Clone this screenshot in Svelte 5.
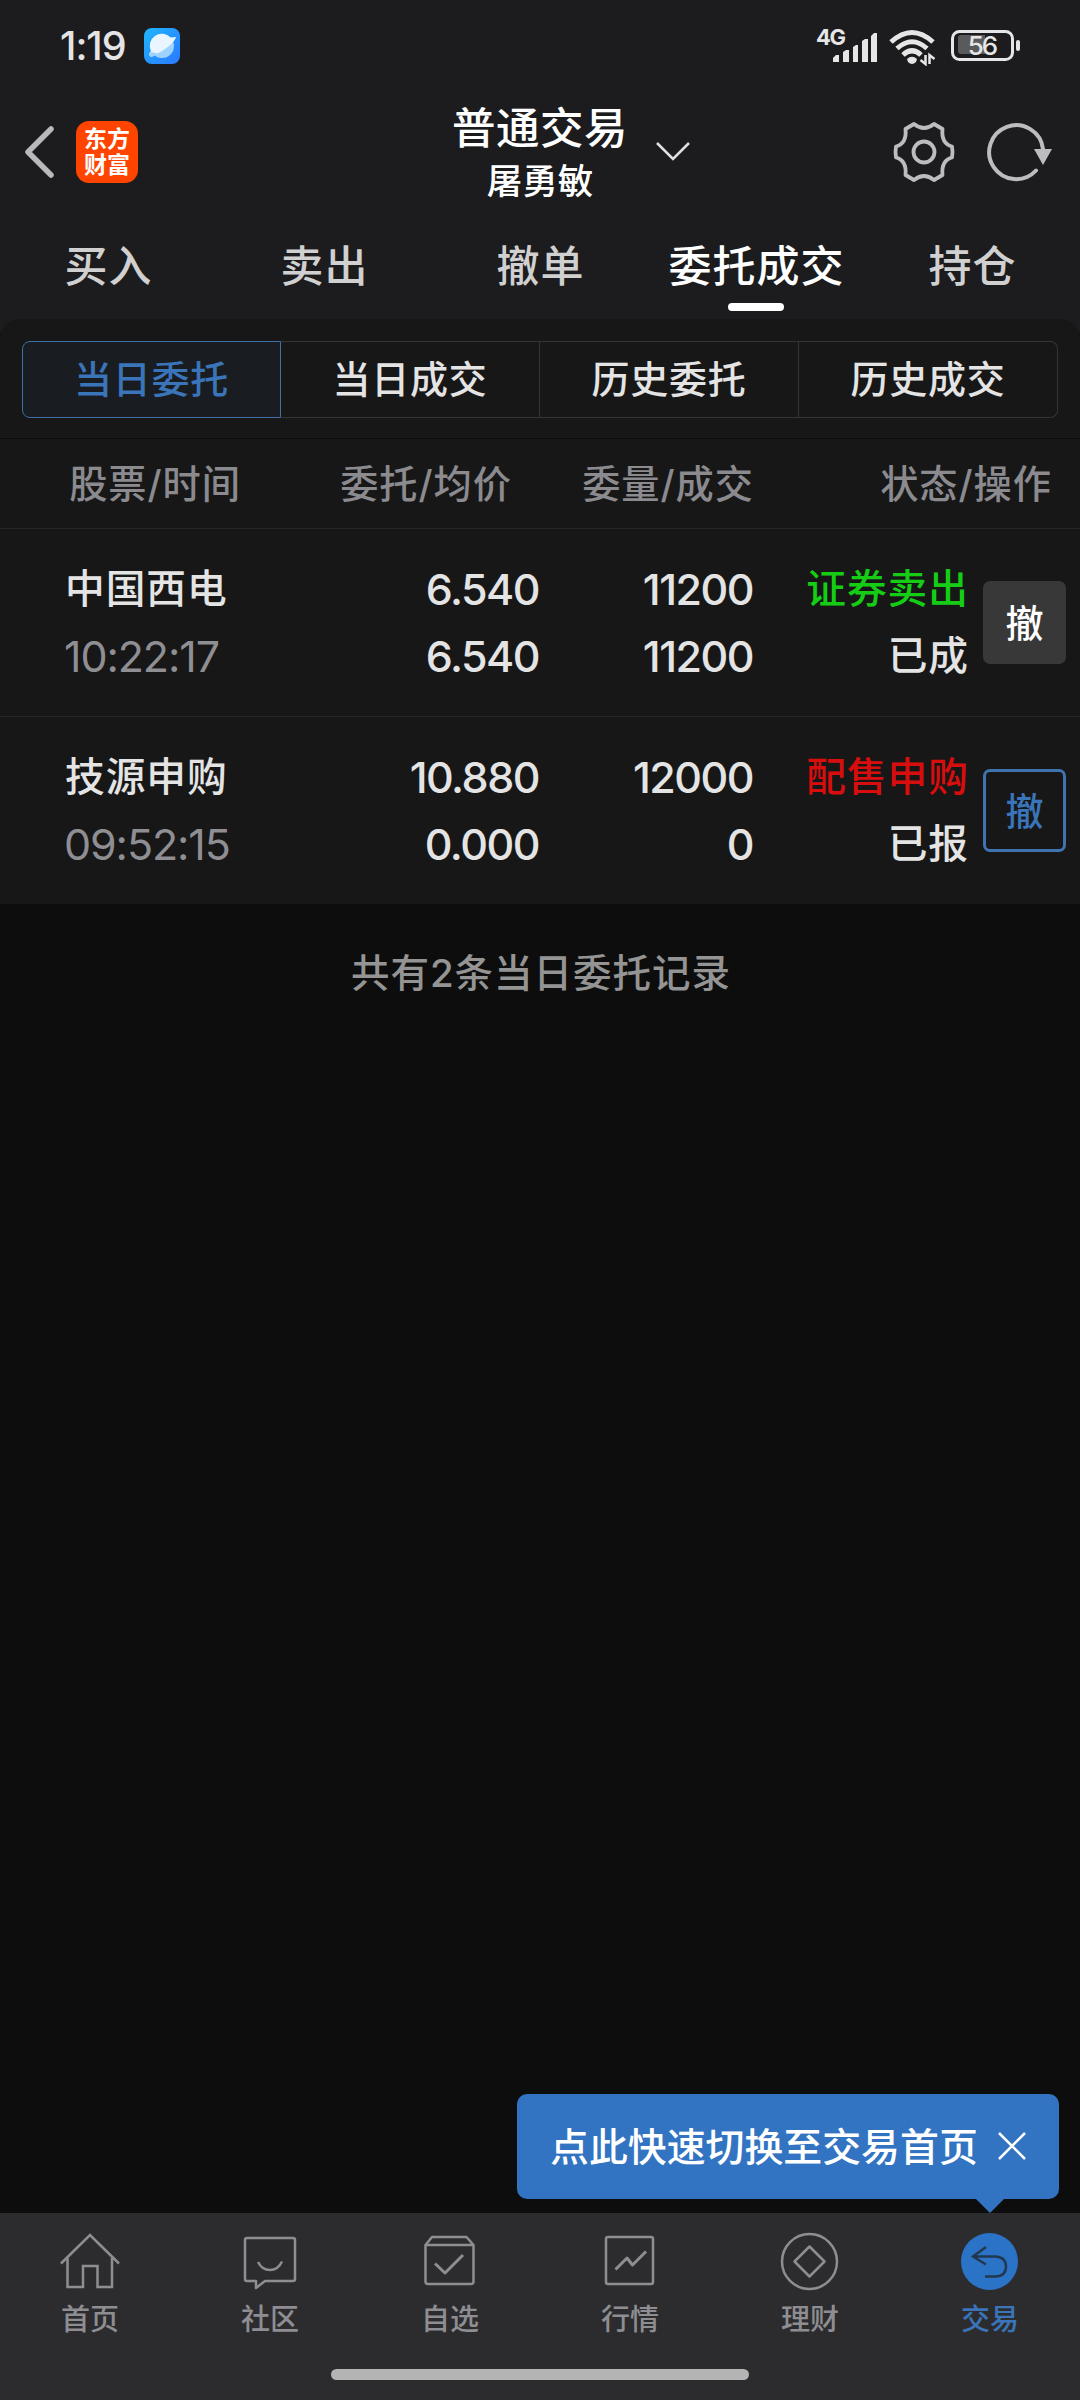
<script lang="ts">
  let activeTab = '委托成交';
  let activeSegment = '当日委托';
  let tipVisible = true;

  const tabs = ['买入', '卖出', '撤单', '委托成交', '持仓'];
  const segments = ['当日委托', '当日成交', '历史委托', '历史成交'];

  const orders = [
    {
      name: '中国西电',
      time: '10:22:17',
      price: '6.540',
      average: '6.540',
      amount: '11200',
      filled: '11200',
      side: '证券卖出',
      type: 'sell',
      status: '已成',
      cancelable: false
    },
    {
      name: '技源申购',
      time: '09:52:15',
      price: '10.880',
      average: '0.000',
      amount: '12000',
      filled: '0',
      side: '配售申购',
      type: 'buy',
      status: '已报',
      cancelable: true
    }
  ];

  const navItems = [
    { id: 'home', label: '首页' },
    { id: 'community', label: '社区' },
    { id: 'watchlist', label: '自选' },
    { id: 'market', label: '行情' },
    { id: 'wealth', label: '理财' },
    { id: 'trade', label: '交易' }
  ];
</script>

<div class="screen">
  <div class="status-bar">
    <span class="clock">1:19</span>
    <svg class="planet" width="36" height="36" viewBox="0 0 36 36">
      <defs>
        <linearGradient id="planet-bg" x1="0" y1="0" x2="1" y2="1">
          <stop offset="0" stop-color="#1fb6ff" />
          <stop offset="1" stop-color="#2a78ff" />
        </linearGradient>
      </defs>
      <rect width="36" height="36" rx="8" fill="url(#planet-bg)" />
      <circle cx="18" cy="18" r="12" fill="#9ed2ff" />
      <path d="M5 27Q5 25 7 23A12 12 0 0 1 26.500 9.500L32 9Q31 13 25 18Q17 25 8 27Z" fill="#e9f5ff" />
      <path d="M5.500 25Q4 29 8 29L14 26L8 24Z" fill="#9ed2ff" />
    </svg>
    <div class="status-icons">
      <svg class="signal" width="64" height="46" viewBox="0 -4 64 46">
        <text x="0" y="18" class="network">4G</text>
        <g fill="#e6e6e6">
          <path d="M17 35v-4l3-3h3v7z" />
          <path d="M27 35V25l3-2h3v12z" />
          <path d="M37 35V20l3-2h2v17z" />
          <path d="M46 35V14l3-2h3v23z" />
          <path d="M55 35V9l3-3h3v29z" />
        </g>
      </svg>
      <svg class="wifi" width="50" height="38" viewBox="0 0 50 38">
        <g fill="none" stroke="#e6e6e6" stroke-width="5">
          <path d="M3 14Q24 -5 45 14" />
          <path d="M9 20.500Q24 7 39 20.500" />
          <path d="M15 27Q24 18.500 33 27" />
        </g>
        <path d="M19 31Q24 26.500 29 31L28 34Q24 38 20 34Z" fill="#e6e6e6" />
        <path d="M37.500 27v9l-5-4M41.500 36v-9l5 4" fill="none" stroke="#e6e6e6" stroke-width="2.500" />
      </svg>
      <svg class="battery" width="70" height="32" viewBox="0 0 70 32">
        <rect x="1.500" y="1.500" width="60" height="28" rx="7" fill="none" stroke="#e6e6e6" stroke-width="3" />
        <path d="M10 5H34V24H10Q7 24 7 21V8Q7 5 10 5Z" fill="#5a5a5c" />
        <rect x="65" y="10" width="4" height="11" rx="2" fill="#e6e6e6" />
        <text x="31" y="25" class="level">56</text>
      </svg>
    </div>
  </div>

  <header>
    <div class="header-left">
      <svg width="32" height="54" viewBox="0 0 32 54">
        <path d="M28 4L5 27L28 50" fill="none" stroke="#b9b9bb" stroke-width="5.500" stroke-linecap="round" stroke-linejoin="round" />
      </svg>
      <div class="brand"><span>东方</span><span>财富</span></div>
    </div>
    <div class="account">
      <h1>普通交易</h1>
      <p>屠勇敏</p>
    </div>
    <svg class="chevron" width="36" height="20" viewBox="0 0 36 20">
      <path d="M2 1L18 17L34 1" fill="none" stroke="#e0e0e0" stroke-width="2.500" />
    </svg>
    <div class="header-right">
      <svg width="64" height="64" viewBox="-32 -32 64 64" fill="none" stroke="#bdbdbf" stroke-width="3.800" stroke-linejoin="round">
        <path d="M-10 -28Q0 -20 10 -28L18.500 -23Q17 -8.500 28 -5.500Q29 0 28 5.500Q17 8.500 18.500 23L10 28Q0 20 -10 28L-18.500 23Q-17 8.500 -28 5.500Q-29 0 -28 -5.500Q-17 -8.500 -18.500 -23Z" />
        <circle r="10.500" />
      </svg>
      <svg width="70" height="64" viewBox="-32 -32 70 64">
        <path d="M27 -3A27 27 0 1 0 20 18.500" fill="none" stroke="#bdbdbf" stroke-width="4" stroke-linecap="round" />
        <path d="M18 -3H36L27 13Z" fill="#bdbdbf" />
      </svg>
    </div>
  </header>

  <nav class="tabs">
    {#each tabs as tab}
      <button class:active={activeTab === tab} on:click={() => (activeTab = tab)}>{tab}</button>
    {/each}
  </nav>

  <main>
    <section class="panel">
      <div class="segments">
        {#each segments as segment}
          <button class:active={activeSegment === segment} on:click={() => (activeSegment = segment)}>
            {segment}
          </button>
        {/each}
      </div>

      <div class="columns">
        <span>股票/时间</span>
        <span>委托/均价</span>
        <span>委量/成交</span>
        <span>状态/操作</span>
      </div>

      {#each orders as order}
        <div class="order">
          <div class="cell left">
            <span>{order.name}</span>
            <span class="num time">{order.time}</span>
          </div>
          <div class="cell">
            <span class="num">{order.price}</span>
            <span class="num">{order.average}</span>
          </div>
          <div class="cell">
            <span class="num">{order.amount}</span>
            <span class="num">{order.filled}</span>
          </div>
          <div class="cell">
            <span class={order.type}>{order.side}</span>
            <span>{order.status}</span>
          </div>
          <button class="cancel" class:enabled={order.cancelable}>撤</button>
        </div>
      {/each}
    </section>

    <p class="summary">共有2条当日委托记录</p>
  </main>

  <footer>
    {#if tipVisible}
      <div class="tip">
        <span>点此快速切换至交易首页</span>
        <svg width="30" height="30" viewBox="0 0 30 30" on:click={() => (tipVisible = false)}>
          <path d="M2 1L28 27M28 1L2 27" stroke="#fff" stroke-width="2.500" />
        </svg>
      </div>
    {/if}
    {#each navItems as item}
      <div class="nav-item" class:current={item.id === 'trade'}>
        <svg width="60" height="60" viewBox="0 0 60 60" fill="none" stroke="#8e8e92" stroke-width="2.500" stroke-linejoin="round">
          {#if item.id === 'home'}
            <path d="M1 32.500L30 4L59 32.500M7.500 27V56H23V35H37.500V56H52V27" stroke-linejoin="miter" />
          {:else if item.id === 'community'}
            <path d="M7 7H53Q55 7 55 9V48Q55 50 53 50H25L16 57V50H7Q5 50 5 48V9Q5 7 7 7Z" />
            <path d="M18 31Q22 39 30 39Q38 39 42 30.500" />
          {:else if item.id === 'watchlist'}
            <path d="M5.500 14L12 6H46.500L53.500 14V50.500Q53.500 53 51 53H8Q5.500 53 5.500 50.500ZM5.500 14H53.500" />
            <path d="M15 32.500L25 42L43 24" stroke-width="3" />
          {:else if item.id === 'market'}
            <rect x="6" y="6" width="47" height="47" rx="2" />
            <path d="M15.500 38.500L27 27L32.500 34L46 20.500" stroke-width="3" />
          {:else if item.id === 'wealth'}
            <circle cx="29.500" cy="30.500" r="27.500" />
            <path d="M29.500 15.500L44.500 30.500L29.500 45.500L14.500 30.500Z" />
          {:else}
            <circle cx="29.500" cy="30.500" r="28.500" fill="#2b73c6" stroke="none" />
            <path d="M26 16L13 25.500L26 33.500M13 25.500H35Q46 26 46 35.500Q46 45.500 35 45.500H25" stroke="#22384f" stroke-linejoin="miter" />
          {/if}
        </svg>
        <span>{item.label}</span>
      </div>
    {/each}
    <div class="home-indicator"></div>
  </footer>
</div>

<style>
  :global(body) {
    background: #0d0d0d;
  }

  .screen {
    display: flex;
    flex-direction: column;
    width: 1080px;
    height: 2400px;
    overflow: hidden;
    background: #0d0d0d;
    color: #e4e4e4;
    font-family: Inter, 'Noto Sans CJK SC', sans-serif;
    font-weight: 500;
  }

  button {
    padding: 0;
    border: none;
    background: none;
    color: inherit;
    font: inherit;
    letter-spacing: inherit;
  }

  h1, p {
    margin: 0;
    font-weight: 500;
  }

  svg {
    display: block;
    flex: none;
  }

  .status-bar {
    display: flex;
    align-items: center;
    height: 92px;
    padding: 0 59px 0 60px;
    background: #1c1c1e;
  }

  .clock {
    width: 84px;
    font-size: 39.5px;
    letter-spacing: -1px;
    white-space: nowrap;
  }

  .status-icons {
    display: flex;
    align-items: center;
    margin-left: auto;
  }

  .wifi {
    margin: 2px 13px 0 8px;
  }

  .network {
    font-size: 22px;
    font-weight: 700;
    letter-spacing: -1.5px;
    fill: #e6e6e6;
  }

  .level {
    font-size: 26px;
    font-weight: 500;
    letter-spacing: -2px;
    text-anchor: middle;
    fill: #e6e6e6;
  }

  header {
    display: grid;
    grid-template-columns: 454px 172px 1fr auto;
    align-items: center;
    height: 120px;
    padding-right: 26px;
    background: #1c1c1e;
  }

  .header-left {
    display: flex;
    align-items: center;
    gap: 21px;
    padding-left: 23px;
  }

  .brand {
    display: flex;
    flex-direction: column;
    align-items: center;
    justify-content: center;
    width: 62px;
    height: 62px;
    border-radius: 13px;
    background: #ff4400;
    color: #fff;
    font-size: 23px;
    font-weight: 700;
    line-height: 26px;
  }

  .account {
    text-align: center;
    color: #fff;
    white-space: nowrap;
  }

  h1 {
    margin-left: -2px;
    font-size: 43.5px;
    line-height: 58px;
    letter-spacing: 0.5px;
  }

  .account p {
    font-size: 35.5px;
    line-height: 49px;
  }

  .chevron {
    margin-left: 29px;
  }

  .header-right {
    display: flex;
    gap: 28px;
  }

  .tabs {
    display: grid;
    grid-template-columns: repeat(5, 1fr);
    height: 107px;
    background: #1c1c1e;
  }

  .tabs button {
    display: flex;
    flex-direction: column;
    align-items: center;
    padding-top: 22px;
    font-size: 43px;
    line-height: 64px;
    letter-spacing: 1px;
    text-indent: 1px;
    color: #d0d0d0;
  }

  .tabs .active {
    color: #fff;
  }

  .tabs .active::after {
    content: '';
    width: 56px;
    height: 8px;
    margin-top: 5px;
    border-radius: 4px;
    background: #fff;
  }

  main {
    flex: 1;
    background: linear-gradient(#1c1c1e 14px, #0d0d0d 14px);
  }

  .panel {
    border-radius: 20px 20px 0 0;
    background: #171717;
  }

  .segments {
    display: grid;
    grid-template-columns: repeat(4, 1fr);
    height: 120px;
    padding: 22px 22px 20px;
    box-sizing: border-box;
    border-bottom: 1px solid #0d0d0d;
  }

  .segments button {
    padding-bottom: 6px;
    border: 1px solid #343436;
    border-left-width: 0;
    font-size: 38px;
    letter-spacing: 0.7px;
  }

  .segments button:first-child {
    border-left-width: 1px;
    border-radius: 8px 0 0 8px;
  }

  .segments button:last-child {
    border-radius: 0 8px 8px 0;
  }

  .segments .active {
    border-color: #3f6fa6;
    background: #191c21;
    color: #3a74b9;
  }

  .columns {
    display: grid;
    grid-template-columns: 241px 271px 242px 1fr;
    align-items: center;
    height: 90px;
    padding: 0 28px 4px 0;
    box-sizing: border-box;
    border-bottom: 1px solid #262627;
    font-size: 38.2px;
    letter-spacing: 1px;
    text-align: right;
    color: #8a8a8f;
  }

  .order {
    display: grid;
    grid-template-columns: 241px 299px 214px 215px 83px;
    align-items: center;
    height: 187px;
  }

  .order + .order {
    border-top: 1px solid #262627;
  }

  .cell {
    display: flex;
    flex-direction: column;
    align-items: flex-end;
    font-size: 39.7px;
    line-height: 67px;
    letter-spacing: 1px;
    white-space: nowrap;
  }

  .cell.left {
    align-items: flex-start;
    padding-left: 65px;
  }

  .num {
    margin-right: 1px;
    font-size: 43px;
    letter-spacing: -1.5px;
  }

  .time {
    margin-left: -1px;
    font-weight: 400;
    letter-spacing: -1.1px;
    color: #8e8e93;
  }

  .sell {
    color: #16cd16;
  }

  .buy {
    color: #d80d0d;
  }

  .cancel {
    width: 83px;
    height: 83px;
    margin-left: 14px;
    padding-bottom: 5px;
    border-radius: 7px;
    background: #383838;
    color: #fff;
    font-size: 38px;
  }

  .cancel.enabled {
    border: 3px solid #3f74b0;
    background: none;
    color: #3a74b9;
  }

  .summary {
    margin-top: 40px;
    font-size: 38.5px;
    line-height: 58px;
    letter-spacing: 1px;
    text-indent: 2px;
    text-align: center;
    color: #949494;
  }

  footer {
    position: relative;
    display: grid;
    grid-template-columns: repeat(6, 1fr);
    height: 187px;
    background: #2c2c2e;
  }

  .nav-item {
    display: flex;
    flex-direction: column;
    align-items: center;
    padding-top: 18px;
    font-size: 29px;
    line-height: 40px;
    color: #8e8e92;
  }

  .nav-item span {
    margin-top: 9px;
  }

  .nav-item.current {
    color: #3a74b9;
  }

  .tip {
    position: absolute;
    right: 21px;
    bottom: 201px;
    display: flex;
    align-items: center;
    justify-content: space-between;
    width: 542px;
    height: 105px;
    box-sizing: border-box;
    padding: 0 32px 0 33px;
    border-radius: 10px;
    background: #3274c2;
    color: #fff;
    font-size: 38.9px;
    white-space: nowrap;
  }

  .tip span {
    padding-bottom: 5px;
  }

  .tip::after {
    content: '';
    position: absolute;
    right: 55px;
    top: 100%;
    border: 14px solid transparent;
    border-top-color: #3274c2;
    border-bottom: none;
  }

  .home-indicator {
    position: absolute;
    left: 331px;
    bottom: 20px;
    width: 418px;
    height: 11px;
    border-radius: 6px;
    background: #b4b4b4;
  }
</style>
